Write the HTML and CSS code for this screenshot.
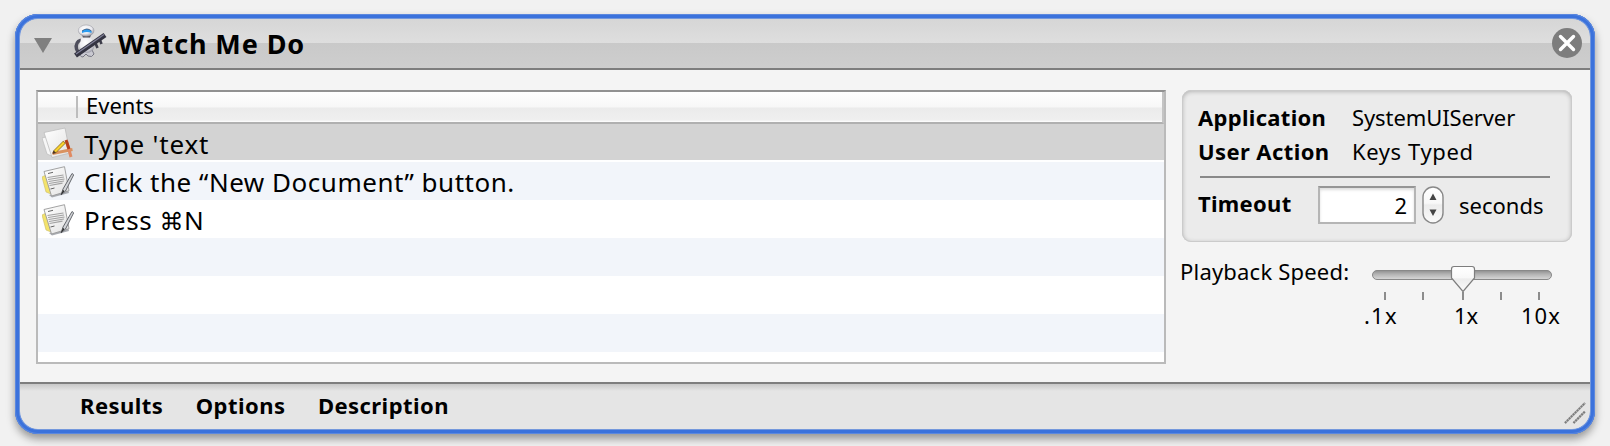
FILE: index.html
```html
<!DOCTYPE html>
<html lang="en">
<head>
<meta charset="utf-8">
<title>Watch Me Do</title>
<link rel="stylesheet" href="styles.css">
</head>
<body>
<svg width="0" height="0" class="defs" aria-hidden="true">
  <defs>
    <linearGradient id="paper" x1="0" y1="0" x2="1" y2="1"><stop offset="0" stop-color="#fff"/><stop offset="1" stop-color="#e2e2e2"/></linearGradient>
    <linearGradient id="trackFill" x1="0" y1="0" x2="0" y2="1"><stop offset="0" stop-color="#8e8e8e"/><stop offset=".4" stop-color="#b2b2b2"/><stop offset="1" stop-color="#d8d8d8"/></linearGradient>
    <linearGradient id="thumbFill" x1="0" y1="0" x2="0" y2="1"><stop offset="0" stop-color="#fff"/><stop offset=".45" stop-color="#f8f8f8"/><stop offset=".5" stop-color="#ececec"/><stop offset="1" stop-color="#fafafa"/></linearGradient>
    <radialGradient id="shell" cx=".42" cy=".35" r=".7"><stop offset="0" stop-color="#fff"/><stop offset=".6" stop-color="#e9e9ee"/><stop offset="1" stop-color="#8f8f9c"/></radialGradient>
    <symbol id="document" viewBox="0 0 32 32">
      <path d="M0 11 4 9l5 19-5-2z" fill="#f3e36a" stroke="#c9bb69" stroke-width=".6"/>
      <path d="M7 29 26 24l1 3-17 4.500z" fill="#a9acb2"/>
      <path d="M2 5.500 22.500.7l4.500 24L9.500 30z" fill="url(#paper)" stroke="#999" stroke-width=".9"/>
      <path d="m6 7.500 5-1.200M8.500 23l4-1" stroke="#555" stroke-width=".9"/>
      <path d="m5.500 11.500 16-2.500M6 13.500l16-2.500M6.500 15.500l16-2.500M7 17.500l15-2.500M7.500 19.500l13-2.300" stroke="#a2a2a2" stroke-width="1.200"/>
      <path d="m19 29 2-6L30 7.500l1.700 1.300L23.500 25z" fill="#d4d6da" stroke="#55585d" stroke-width=".9"/>
      <path d="m19 29 2-5 1.500 1z" fill="#222"/>
    </symbol>
  </defs>
</svg>
<main class="window">
  <header class="titlebar">
    <svg class="disclosure" width="20" height="17" viewBox="0 0 20 17"><path d="M1 1h18L10 16z" fill="#808080"/></svg>
    <svg class="robot" width="34" height="36" viewBox="0 0 34 36">
      <path d="M8 16Q2 18 3.500 25l2 4" fill="none" stroke="#4d4d5b" stroke-width="3.400"/>
      <path d="M8 26h11l2 4q-2 4-6 2l-2-2-3 3q-4 0-3-6z" fill="#c9c9d1" stroke="#6d6d7a" stroke-width=".9"/>
      <path d="M8 15q5-4 11 0l2.500 7q-1 6-7.500 7-7-1-8-6z" fill="url(#shell)"/>
      <path d="M9 11h9l-1 2.500h-7z" fill="#4b4b57"/>
      <ellipse cx="13.200" cy="6.600" rx="7.800" ry="5.700" fill="url(#shell)" stroke="#95959d" stroke-width=".5"/>
      <path d="M9 7q5-4 9.500 0v2Q14 7 9 9z" fill="#2c9cf0"/>
      <path d="M9 7q5-4 9.500 0" fill="none" stroke="#2e4a70" stroke-width=".8"/>
      <path d="m22 18 2.500 6M26.500 15l2 5" stroke="#3d3d4a" stroke-width="2.600"/>
      <path d="M2.500 31.500 32 11" stroke="#343442" stroke-width="5"/>
      <path d="M3 30 31 10.600" stroke="#82829a" stroke-width="1.200"/>
    </svg>
    <h1 class="title">Watch Me Do</h1>
    <svg class="close" width="30" height="30" viewBox="0 0 30 30"><circle cx="15" cy="15" r="15" fill="#7d7d7d"/><path d="m8.500 8.500 13 13m0-13-13 13" stroke="#fff" stroke-width="3.400" stroke-linecap="round"/></svg>
  </header>
  <section class="content">
    <div class="table">
      <div class="table-head"><span class="column-name">Events</span></div>
      <div class="row selected">
        <svg class="row-icon" width="32" height="32" viewBox="0 0 32 32">
          <path d="m0 11 8-2 4 21-7-3z" fill="#f6f6f6" stroke="#bbb" stroke-width=".7"/>
          <path d="M2 5.500 23 1l5 25-18 4.500z" fill="url(#paper)" stroke="#bcbcbc" stroke-width=".8"/>
          <path d="m10.500 26.500 20-4" stroke="#d9925f" stroke-width="3"/>
          <path d="m24.500 14 4.500 16" stroke="#e08a62" stroke-width="3"/>
          <path d="m24 13 3 9" stroke="#b5401c" stroke-width="3"/>
          <path d="m12.500 25 10-10" stroke="#8d6d1f" stroke-width="3.600"/>
          <path d="m13 24.500 9-9" stroke="#f8d22f" stroke-width="2.400"/>
          <path d="m10.500 27 .8-3.500 2.700 2.500z" fill="#4b3424"/>
        </svg>
        <span class="event typed">Type 'text</span>
      </div>
      <div class="row"><svg class="row-icon" width="32" height="32"><use href="#document"/></svg><span class="event">Click the “New Document” button.</span></div>
      <div class="row"><svg class="row-icon" width="32" height="32"><use href="#document"/></svg><span class="event">Press <span class="cmd">⌘</span>N</span></div>
      <div class="row"></div>
      <div class="row"></div>
      <div class="row"></div>
    </div>
    <aside class="side">
      <div class="info">
        <div class="field"><b class="label application">Application</b><span class="server">SystemUIServer</span></div>
        <div class="field"><b class="label action">User Action</b><span class="keys">Keys Typed</span></div>
        <div class="rule"></div>
        <div class="timeout">
          <b class="label time">Timeout</b>
          <div class="number">2</div>
          <svg class="stepper" width="22" height="38" viewBox="0 0 22 38"><rect x="1" y="1" width="20" height="36" rx="10" fill="url(#thumbFill)" stroke="#888" stroke-width="1.400"/><path d="M7.500 14 11 7.500l3.500 6.500zM7.500 23.500h7L11 30z" fill="#444"/></svg>
          <span>seconds</span>
        </div>
      </div>
      <div class="playback">
        <span class="speed">Playback Speed:</span>
        <div class="slider">
          <svg width="182" height="36" viewBox="0 0 182 36">
            <rect x="1.500" y="5.500" width="179" height="9" rx="4.500" fill="url(#trackFill)" stroke="#888"/>
            <path d="M14 27v8M52 27v8M92 27v8M130 27v8M168 27v8" stroke="#8c8c8c" stroke-width="2"/>
            <path d="M83 1.500h18q2.500 0 2.500 2.500v9L92 26.500 80.500 13V4q0-2.500 2.500-2.500z" fill="url(#thumbFill)" stroke="#7d7d7d" stroke-width="1.200"/>
          </svg>
          <div class="scale"><span class="slow">.1x</span><span class="normal">1x</span><span class="fast">10x</span></div>
        </div>
      </div>
    </aside>
  </section>
  <footer class="footer">
    <b class="tab">Results</b><b class="tab">Options</b><b class="tab">Description</b>
    <svg class="grip" width="22" height="22" viewBox="0 0 22 22"><path d="M1 21 21 1M9.500 21 21 9.500" stroke="#b4b4b4" stroke-width="2.400"/><path d="M1 21 21 1M9.500 21 21 9.500" stroke="#7c7c7c" stroke-width="2" stroke-dasharray="1.800 1"/></svg>
  </footer>
</main>
</body>
</html>
```
FILE: styles.css
```css
* { box-sizing: border-box; }
body { margin: 0; padding: 14px 15px; height: 446px; overflow: hidden; background: #f1f1f1; color: #000; font: 22px/34px "Noto Sans", sans-serif; }
svg { display: block; flex: none; }
.defs { position: absolute; }
span, b { white-space: pre; }
.window { position: relative; width: 1580px; height: 420px; display: flex; flex-direction: column; background: #f4f4f4; border: 5px solid #3b72dc; border-radius: 23px; box-shadow: 0 5px 9px rgba(0,0,0,.38); }
.window::after { content: ""; position: absolute; inset: -5px; border-radius: 23px; pointer-events: none; box-shadow: inset 0 0 0 1px #5c88de, inset 0 0 0 4px #3b72dc, inset 0 0 0 5px #7498dc; }
.titlebar { height: 51px; display: flex; align-items: flex-start; border-bottom: 2px solid #7e7e7e; border-radius: 18px 18px 0 0; background: linear-gradient(#d6d6d6 0, #dedede 24px, #c9c9c9 24px, #cecece 49px); }
.disclosure { margin: 18px 0 0 13px; }
.robot { margin: 5px 0 0 20px; }
.title { margin: 0 auto 0 11px; font-size: 27px; line-height: 49px; font-weight: 700; letter-spacing: .9px; }
.close { margin: 9px 8px 0 0; }
.content { height: 312px; padding: 20px 18px 0 16px; display: flex; gap: 14px; }
.table { width: 1130px; height: 274px; border: 2px solid #bababa; border-top-color: #929292; background: #fff; overflow: hidden; }
.table-head { height: 32px; padding: 4px 0 4px 38px; display: flex; border-bottom: 2px solid #b0b0b0; background: linear-gradient(#fff 0, #f7f7f7 15px, #ebebeb 16px, #efefef 28px, #fff 30px); border-right: 2px solid #c4c4c4; }
.column-name { padding-left: 8px; border-left: 2px solid #bdbdbd; line-height: 18px; }
.row { height: 38px; display: flex; padding-left: 4px; font-size: 26px; line-height: 40px; }
.row:nth-child(odd) { background: #f2f5fa; }
.row.selected { background: linear-gradient(#d3d3d3 36px, #fff 36px); }
.row-icon { margin: 4px 10px 0 0; }
.selected .row-icon { margin-top: 3px; }
.event { letter-spacing: .52px; }
.typed { letter-spacing: .8px; }
.cmd { font-family: "DejaVu Sans", sans-serif; font-size: 24px; line-height: 1; }
.side { width: 392px; }
.info { margin-left: 2px; height: 152px; padding: 10px 16px; border-radius: 9px; background: #ebebeb; box-shadow: inset 0 0 0 1px #cbcbcb, inset 0 1px 5px rgba(0,0,0,.3); }
.field { display: flex; height: 34px; }
.label { width: 154px; }
.application { letter-spacing: .3px; }
.action { letter-spacing: .4px; }
.server { letter-spacing: -.1px; }
.keys { letter-spacing: .6px; }
.rule { height: 2px; width: 350px; margin: 8px 0 8px 2px; background: #898989; }
.timeout { display: flex; height: 38px; line-height: 38px; }
.time { width: 120px; line-height: 35px; letter-spacing: .3px; }
.number { width: 98px; padding-right: 7px; text-align: right; line-height: 34px; border: 2px solid #b5b5b5; border-top-color: #969696; background: #fff; box-shadow: inset 0 2px 3px #ddd; }
.stepper { margin: 0 15px 0 6px; }
.playback { display: flex; height: 90px; padding-top: 14px; }
.speed { width: 191px; line-height: 30px; letter-spacing: .2px; }
.slider { padding-top: 9px; }
.scale { display: flex; line-height: 29px; }
.slow { width: 90px; margin-left: -7px; letter-spacing: 1.2px; }
.normal { width: 67px; }
.fast { letter-spacing: 1px; }
.footer { height: 47px; padding-left: 60px; display: flex; line-height: 42px; border-top: 2px solid #7e7e7e; border-radius: 0 0 18px 18px; background: linear-gradient(#c8c8c8, #e5e5e5 7px); }
.tab { margin-right: 32.500px; letter-spacing: .45px; }
.grip { margin: 18px 4px 0 auto; }
```
